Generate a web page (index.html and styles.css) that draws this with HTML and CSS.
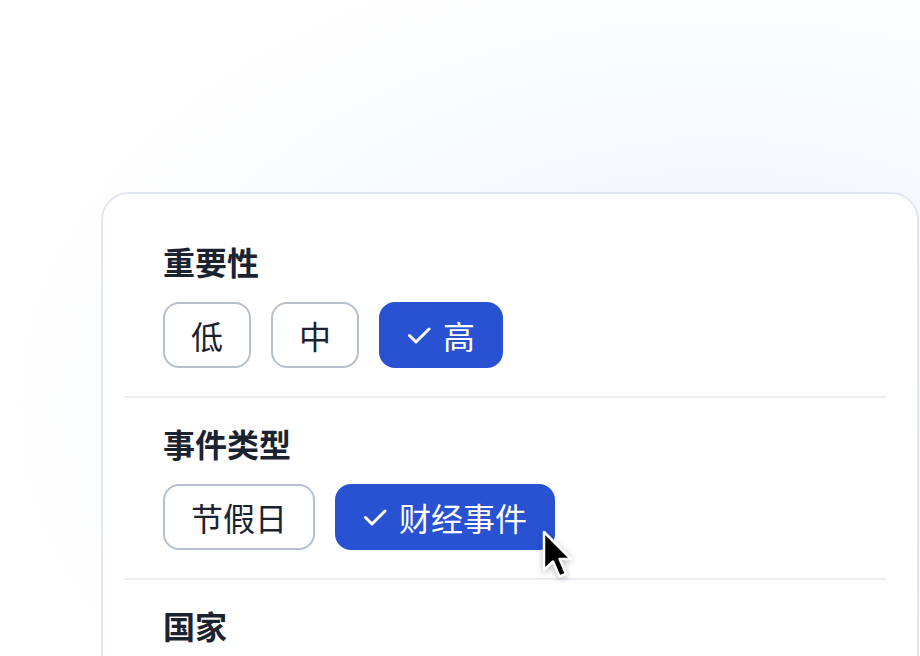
FILE: index.html
```html
<!DOCTYPE html>
<html lang="zh-CN">
<head>
<meta charset="utf-8">
<title>筛选</title>
<link rel="stylesheet" href="styles.css">
</head>
<body>
<div class="page">
  <div class="card">
    <section class="group">
      <h2 class="group-title">重要性</h2>
      <div class="chips">
        <button class="chip">低</button>
        <button class="chip">中</button>
        <button class="chip chip-on"><svg class="check" viewBox="0 0 24 24"><path d="M2.5 12.5l6.5 6.5L22 6"/></svg>高</button>
      </div>
    </section>
    <section class="group">
      <h2 class="group-title">事件类型</h2>
      <div class="chips">
        <button class="chip">节假日</button>
        <button class="chip chip-on"><svg class="check" viewBox="0 0 24 24"><path d="M2.5 12.5l6.5 6.5L22 6"/></svg>财经事件<svg class="cursor" viewBox="0 0 32 52"><path d="M3 3 L3 41 L12 32.5 L18.5 47.5 L25 44.8 L18.6 30 L30 30 Z"/></svg></button>
      </div>
    </section>
    <section class="group">
      <h2 class="group-title">国家</h2>
    </section>
  </div>
</div>
</body>
</html>
```

FILE: styles.css
```css
html, body {
  margin: 0;
  padding: 0;
}
body {
  width: 920px;
  height: 656px;
  overflow: hidden;
  font-family: "Noto Sans CJK SC", "Noto Sans", sans-serif;
  color: #1b2230;
  background: radial-gradient(ellipse 900px 600px at 78% 62%, #ecf2fb 0%, #f6f9fd 45%, #ffffff 80%);
}
.page {
  box-sizing: border-box;
  width: 920px;
  height: 656px;
  padding: 192px 0 0 101px;
  overflow: hidden;
}
.card {
  box-sizing: border-box;
  width: 818px;
  height: 520px;
  background: #ffffff;
  border: 2px solid #e1e6f0;
  border-radius: 28px;
  padding: 22px 31px 0 21px;
  overflow: hidden;
}
.group {
  padding: 25px 0 28px 39px;
  border-bottom: 2px solid #eaedf3;
}
.group-title {
  margin: 0;
  font-size: 32px;
  line-height: 40px;
  font-weight: 700;
  color: #1b2230;
}
.chips {
  display: flex;
  gap: 20px;
  margin-top: 21px;
}
.chip {
  position: relative;
  display: flex;
  align-items: center;
  gap: 12px;
  box-sizing: border-box;
  height: 66px;
  padding: 0 26px;
  border: 2px solid #b6bfcd;
  border-radius: 16px;
  background: #ffffff;
  color: #1b2230;
  font-family: "Noto Sans CJK SC", "Noto Sans", sans-serif;
  font-size: 32px;
  font-weight: 400;
  line-height: 48px;
}
.chip-on {
  background: #2852d2;
  border-color: #2852d2;
  color: #ffffff;
}
.check {
  width: 24px;
  height: 24px;
  fill: none;
  stroke: #ffffff;
  stroke-width: 3;
  stroke-linecap: round;
  stroke-linejoin: round;
}
.cursor {
  position: absolute;
  left: 204px;
  top: 43px;
  width: 32px;
  height: 52px;
  fill: #000000;
  stroke: #ffffff;
  stroke-width: 2.5;
  stroke-linejoin: round;
  filter: drop-shadow(0 2px 3px rgba(0, 0, 0, 0.25));
}
```
